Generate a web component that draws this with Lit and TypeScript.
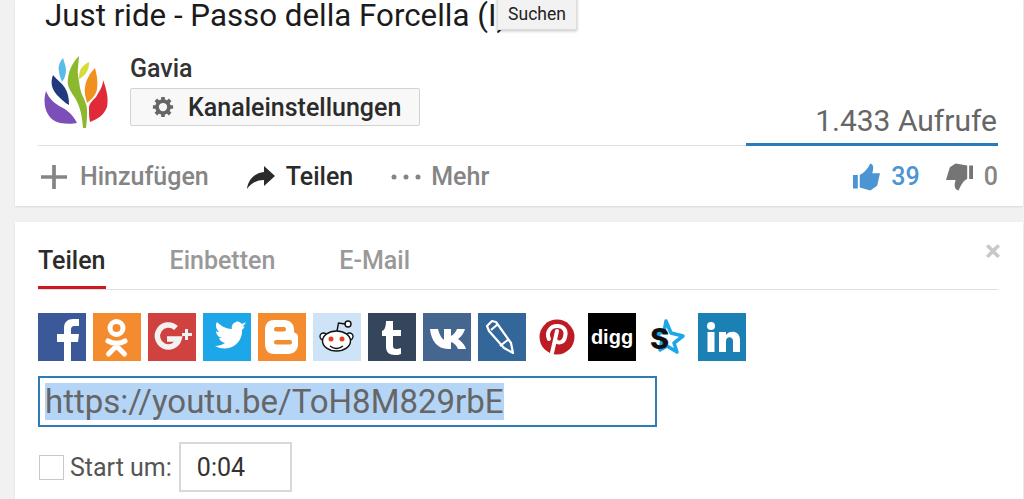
import { LitElement, html, css, svg } from "lit";
import { customElement } from "lit/decorators.js";

const shareIcons = [
  { name: "facebook", bg: "#3b5998", art: svg`<path fill="#fff" d="M26 48V29h-7v-8h7v-6c0-6 4-9 9-9h6v7h-4c-3 0-4 1-4 4v4h8l-1 8h-7v19z"/>` },
  { name: "odnoklassniki", bg: "#f48c2f", art: svg`<circle cx="23.500" cy="15" r="6.500" fill="none" stroke="#fff" stroke-width="5"/><path fill="none" stroke="#fff" stroke-width="5" stroke-linecap="round" d="M15 28c5 3 12 3 17 0M23.500 31v2M15.500 41l8-8 8 8"/>` },
  { name: "google", bg: "#d0423f", art: svg`<path fill="none" stroke="#f2f2f2" stroke-width="5.500" d="M28 15a11 11 0 1 0 3 11H19"/><path fill="#f2f2f2" d="M34 20h3v-4h3v4h4v3h-4v4h-3v-4h-3z"/>` },
  { name: "twitter", bg: "#1da7e8", art: svg`<path fill="#fff" d="M40 13c1-1 2-2 3-4-1 1-3 1-4 2-2-2-4-3-6-2-3 1-5 4-4 7-6 0-11-3-15-7-2 3-1 7 2 10-1 0-2 0-3-1 0 3 2 6 6 7-1 0-2 0-3 0 1 3 3 4 6 5-3 2-6 3-10 3 11 6 25 1 27-13 0-1 0-2 0-3 1-1 2-2 3-4-1 1-2 1-2 0z"/>` },
  { name: "blogger", bg: "#f48c2f", art: svg`<path fill="#fff" d="M16 7h10c6 0 10 4 10 9v2c0 2 2 2 3 3 1 1 1 3 1 5v5c0 6-4 10-10 10H16c-6 0-9-4-9-10V17C7 11 10 7 16 7z"/><rect x="16" y="14" width="12" height="4.500" rx="2.200" fill="#f48c2f"/><rect x="16" y="27" width="18" height="4.500" rx="2.200" fill="#f48c2f"/>` },
  { name: "reddit", bg: "#cee3f8", art: svg`<g fill="#fff" stroke="#111" stroke-width="1.400"><circle cx="10.500" cy="23.500" r="3.500"/><circle cx="36.500" cy="23.500" r="3.500"/><ellipse cx="23.500" cy="28" rx="14" ry="10"/><circle cx="35" cy="11" r="3"/><path fill="none" d="M24 18l1.500-8 7 1"/><path fill="none" d="M17 33c4 3 9 3 13 0"/></g><circle cx="18" cy="26" r="2.500" fill="#e8401c"/><circle cx="29" cy="26" r="2.500" fill="#e8401c"/>` },
  { name: "tumblr", bg: "#35465c", art: svg`<path fill="#fff" d="M18 8h7v9h8v6h-8v10c0 3 3 4 8 2v6c-2 1-4 1-6 1-6 0-9-3-9-8V23h-4v-5c3-1 4-5 4-10z"/>` },
  { name: "vk", bg: "#45668e", art: svg`<path fill="#fff" d="M7 16h8c1 4 3 9 6 11V16h7v7c2-1 5-4 6-7h8c-1 4-4 8-7 10 3 2 7 6 8 10h-8c-1-3-4-6-7-7v7h-3C14 36 8 27 7 16z"/>` },
  { name: "livejournal", bg: "#336699", art: svg`<path fill="none" stroke="#fff" stroke-width="2.200" stroke-linejoin="round" d="M9 13l5-5 4 1 15 21 2 10-9-5L11 18zM13 17l7-6M22 33l9-7"/>` },
  { name: "pinterest", bg: "transparent", art: svg`<circle cx="24" cy="24" r="17.500" fill="#bd1c24"/><path fill="none" stroke="#fff" stroke-width="4" stroke-linecap="round" d="M16 26c-3-6 1-13 8-13 7 0 10 5 8 11-1 5-6 7-9 4M24 18l-5 22"/>` },
  { name: "digg", bg: "#000", label: "digg" },
  { name: "stumble", bg: "transparent", star: true },
  { name: "linkedin", bg: "#1b80b3", art: svg`<circle cx="13" cy="13" r="4" fill="#fff"/><rect x="9.500" y="19" width="7" height="20" fill="#fff"/><path fill="#fff" d="M21 19h7v3c3-5 14-5 14 5v12h-7V28c0-5-7-5-7 0v11h-7z"/>` },
];

@customElement("app-root")
export class AppRoot extends LitElement {
  static styles = css`
    :host {
      display: block;
      height: 499px;
      overflow: hidden;
      background: #f1f1f1;
      font-family: Roboto, sans-serif;
      position: relative;
    }
    .card {
      background: #fff;
      margin: 0 1px 0 15px;
      box-shadow: 0 1px 2px rgba(0, 0, 0, 0.1);
    }
    .info {
      height: 206px;
      padding: 0 25px 0 23px;
      box-sizing: border-box;
      margin-bottom: 16px;
    }
    h1 {
      margin: 0;
      padding: 0 0 0 7px;
      height: 46px;
      font-weight: 400;
      font-size: 31.300px;
      line-height: 31px;
      color: #1b1b1b;
      white-space: nowrap;
    }
    .tooltip {
      position: absolute;
      left: 497px;
      top: -2px;
      width: 80px;
      height: 32px;
      box-sizing: border-box;
      display: flex;
      align-items: center;
      justify-content: center;
      background: #f2f2f2;
      border: 1px solid #dcdcdc;
      box-shadow: 0 1px 3px rgba(0, 0, 0, 0.25);
      font-size: 17.500px;
      color: #222;
    }
    .owner {
      height: 100px;
      display: flex;
      position: relative;
    }
    .logo {
      width: 66px;
      height: 76px;
      margin: 8px 20px 0 6px;
      flex: none;
    }
    .channel {
      display: flex;
      flex-direction: column;
      padding-top: 9px;
    }
    .name {
      font-size: 25px;
      font-weight: 500;
      line-height: 28px;
      color: #333;
    }
    .settings {
      margin-top: 5px;
      width: 290px;
      height: 38px;
      box-sizing: border-box;
      display: flex;
      align-items: center;
      gap: 14px;
      padding-left: 21px;
      background: #f8f8f8;
      border: 1px solid #d3d3d3;
      border-radius: 2px;
      font-size: 25px;
      font-weight: 500;
      color: #2b2b2b;
      white-space: nowrap;
    }
    .views {
      position: absolute;
      right: 0;
      bottom: 0;
      width: 252px;
      box-sizing: border-box;
      text-align: right;
      font-size: 30px;
      line-height: 40px;
      padding: 0 1px 2px 0;
      color: #666;
      border-bottom: 3px solid #2a7abf;
    }
    .rule {
      height: 1px;
      background: #e0e0e0;
      margin-top: -1px;
      margin-bottom: 1px;
    }
    .actions {
      display: flex;
      align-items: center;
      height: 59px;
      font-size: 25px;
      font-weight: 500;
      color: #858585;
    }
    .action {
      display: flex;
      align-items: center;
      gap: 13px;
      margin-right: 38px;
    }
    .action:first-child {
      margin-left: 3px;
    }
    .action.active {
      gap: 11px;
      color: #2b2b2b;
    }
    .action.more {
      gap: 10px;
    }
    .votes {
      margin-left: auto;
      display: flex;
      align-items: center;
    }
    .like {
      color: #4c94d2;
      margin-right: 26px;
    }
    .vote {
      display: flex;
      align-items: center;
      gap: 11px;
    }
    .share {
      height: 277px;
      padding: 24px 25px 0 23px;
      box-sizing: border-box;
      position: relative;
    }
    .close {
      position: absolute;
      right: 22px;
      top: 14px;
      font-size: 30px;
      line-height: 30px;
      font-weight: 700;
      color: #c8c8c8;
    }
    .tabs {
      display: flex;
      gap: 64px;
      height: 43px;
      border-bottom: 1px solid #e0e0e0;
      font-size: 25px;
      font-weight: 500;
      line-height: 29px;
      color: #999;
    }
    .tab {
      box-sizing: border-box;
      height: 43px;
    }
    .tab.on {
      color: #2b2b2b;
      border-bottom: 3px solid #cc181e;
    }
    .icons {
      display: flex;
      gap: 7px;
      margin-top: 23px;
    }
    .icon {
      width: 48px;
      height: 48px;
      flex: none;
      display: flex;
      align-items: center;
      justify-content: center;
      color: #fff;
      font-family: "Liberation Sans", sans-serif;
      font-size: 20px;
      font-weight: 700;
    }
    .icon svg {
      display: block;
      width: 48px;
      height: 48px;
    }
    .url {
      margin-top: 15px;
      width: 619px;
      height: 51px;
      box-sizing: border-box;
      border: 2px solid #2d7cb5;
      padding: 5px;
      font-size: 33px;
      line-height: 37px;
      color: #666;
    }
    .url span {
      display: inline-block;
      background: #b5d5f7;
      height: 37px;
    }
    .start {
      display: flex;
      align-items: center;
      margin-top: 15px;
      font-size: 25px;
      color: #555;
    }
    .box {
      width: 25px;
      height: 25px;
      box-sizing: border-box;
      border: 1px solid #c8c8c8;
      margin: 0 6px 0 1px;
    }
    .time {
      width: 113px;
      height: 50px;
      box-sizing: border-box;
      border: 2px solid #d8d8d8;
      margin-left: 7px;
      padding-left: 16px;
      display: flex;
      align-items: center;
      color: #333;
    }
  `;

  renderIcon(icon: (typeof shareIcons)[number]) {
    if (icon.label) {
      return html`<div class="icon" style="background:${icon.bg}">${icon.label}</div>`;
    }
    if (icon.star) {
      return html`<div class="icon">
        <svg viewBox="0 0 48 48">
          <path fill="#fff" stroke="#1da7e8" stroke-width="3.500" stroke-linejoin="round" d="M23 8l5 12 12 3-9 7 3 9-10-6-7 4 2-11-6-5 8-2z"/>
          <text x="7" y="36" font-family="Roboto, sans-serif" font-weight="700" font-size="38" fill="#111">s</text>
        </svg>
      </div>`;
    }
    return html`<div class="icon" style="background:${icon.bg}">
      <svg viewBox="0 0 48 48">${icon.art}</svg>
    </div>`;
  }

  render() {
    return html`
      <div class="card info">
        <h1>Just ride - Passo della Forcella (I)</h1>
        <div class="owner">
          <svg class="logo" viewBox="0 0 66 76">
            <path fill="#7c4fb8" d="M2 37C-2 50 2 66 16 69c6 1 13 1 17 0-3-6-7-11-14-15-8-4-14-9-17-17z"/>
            <path fill="#21397f" d="M9 21c-3 8-1 14 4 20 4 4 8 8 12 10 0-7-1-12-4-17-3-5-8-8-12-13z"/>
            <path fill="#58bde6" d="M19 4c-4 5-5 9-4 13 0 4 2 8 3 11 3-4 4-8 4-12 0-4-2-8-3-12z"/>
            <path fill="#8cb82e" d="M35 2c-6 6-10 14-11 22-1 7 1 11 5 17 6 8 9 18 10 33h3c1-8 2-18 0-24-2-6-5-10-6-16-1-9-3-14-2-20 0-4 1-8 1-12z"/>
            <path fill="#d8dc3a" d="M45 8c-4 2-8 5-9 9-1 3-1 6-1 8 4-2 8-6 9-10 1-2 1-5 1-7z"/>
            <path fill="#f0901e" d="M51 14c-5 5-9 12-10 19-1 6 1 11 2 16 5-4 9-8 10-14 1-7 0-14-2-21z"/>
            <path fill="#e02a3a" d="M59 26c0 6-3 10-7 17-4 4-7 7-7 11 0 5 0 10 1 14 8-3 14-7 17-15 2-9-1-19-4-27z"/>
          </svg>
          <div class="channel">
            <div class="name">Gavia</div>
            <div class="settings">
              <svg width="22" height="22" viewBox="0 0 24 24">
                <circle cx="12" cy="12" r="6.500" fill="none" stroke="#666" stroke-width="4"/>
                <path stroke="#666" stroke-width="4" d="M12 1v4M12 19v4M1 12h4M19 12h4M4.200 4.200l3 3M16.800 16.800l3 3M4.200 19.800l3-3M16.800 7.200l3-3"/>
              </svg>
              Kanaleinstellungen
            </div>
          </div>
          <div class="views">1.433 Aufrufe</div>
        </div>
        <div class="rule"></div>
        <div class="actions">
          <div class="action">
            <svg width="26" height="26" viewBox="0 0 28 28"><path fill="#858585" d="M12 1h4v11h12v4H16v11h-4V16H0v-4h12z"/></svg>
            Hinzufügen
          </div>
          <div class="action active">
            <svg width="28" height="24" viewBox="0 0 28 24"><path fill="#2b2b2b" d="M17 1l11 10-11 10v-6C10 15 4 18 0 24c1-9 7-16 17-17z"/></svg>
            Teilen
          </div>
          <div class="action more">
            <svg width="30" height="8" viewBox="0 0 30 8"><circle cx="3" cy="4" r="2.500" fill="#858585"/><circle cx="15" cy="4" r="2.500" fill="#858585"/><circle cx="27" cy="4" r="2.500" fill="#858585"/></svg>
            Mehr
          </div>
          <div class="votes">
            <div class="vote like">
              <svg width="27" height="28" viewBox="0 0 28 28"><path fill="#4c94d2" d="M0 12h5v14H0zM7 12c4-2 8-6 11-12 3 1 4 4 2 10h8l-3 13-7 5-11-3z"/></svg>
              39
            </div>
            <div class="vote">
              <svg width="27" height="28" viewBox="0 0 28 28"><path fill="#757575" d="M28 16h-4V2h4zM22 16c-3 1-6 5-9 12-4-1-5-5-3-11H0L4 4l6-4 12 2z"/></svg>
              0
            </div>
          </div>
        </div>
      </div>
      <div class="card share">
        <div class="close">×</div>
        <div class="tabs">
          <div class="tab on">Teilen</div>
          <div class="tab">Einbetten</div>
          <div class="tab">E-Mail</div>
        </div>
        <div class="icons">${shareIcons.map((icon) => this.renderIcon(icon))}</div>
        <div class="url"><span>https://youtu.be/ToH8M829rbE</span></div>
        <div class="start">
          <div class="box"></div>
          Start um:
          <div class="time">0:04</div>
        </div>
      </div>
      <div class="tooltip">Suchen</div>
    `;
  }
}
